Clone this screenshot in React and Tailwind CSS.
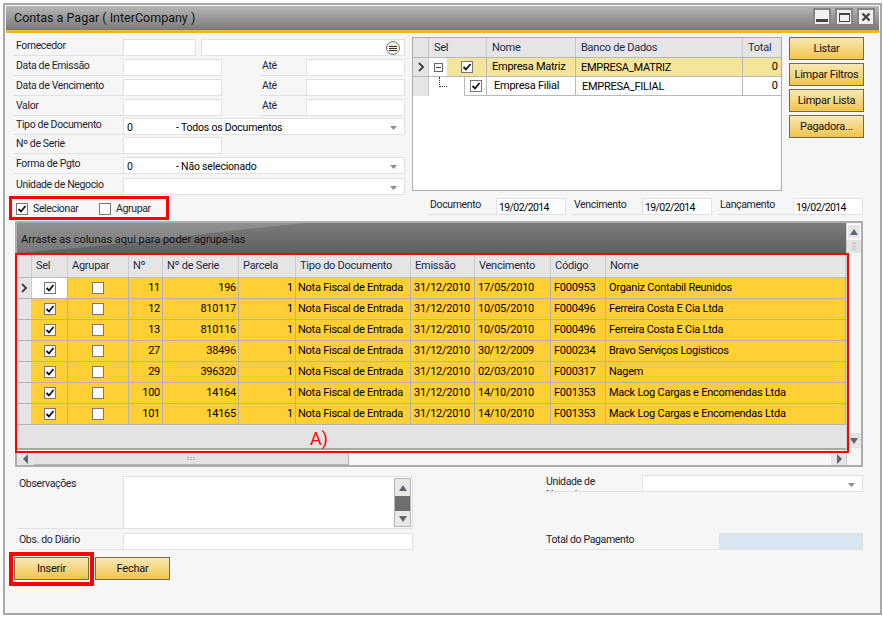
const columns = [
  { label: "Sel", width: "w-[36px]" },
  { label: "Agrupar", width: "w-[61px]" },
  { label: "Nº", width: "w-[34px]" },
  { label: "Nº de Serie", width: "w-[76px]" },
  { label: "Parcela", width: "w-[57px]" },
  { label: "Tipo do Documento", width: "w-[115px]" },
  { label: "Emissão", width: "w-[64px]" },
  { label: "Vencimento", width: "w-[76px]" },
  { label: "Código", width: "w-[55px]" },
  { label: "Nome", width: "w-[240px]" },
];

const rows = [
  ["11", "196", "17/05/2010", "F000953", "Organiz Contabil Reunidos"],
  ["12", "810117", "10/05/2010", "F000496", "Ferreira Costa E Cia Ltda"],
  ["13", "810116", "10/05/2010", "F000496", "Ferreira Costa E Cia Ltda"],
  ["27", "38496", "30/12/2009", "F000234", "Bravo Serviços Logisticos"],
  ["29", "396320", "02/03/2010", "F000317", "Nagem"],
  ["100", "14164", "14/10/2010", "F001353", "Mack Log Cargas e Encomendas Ltda"],
  ["101", "14165", "14/10/2010", "F001353", "Mack Log Cargas e Encomendas Ltda"],
];

function Check({ checked, className = "" }) {
  return (
    <span className={`inline-flex h-[12px] w-[12px] shrink-0 items-center justify-center border border-[#777] bg-white ${className}`}>
      {checked && (
        <svg width="10" height="10" viewBox="0 0 10 10">
          <path d="M1.5 5 L4 7.5 L8.5 2" fill="none" stroke="#111" strokeWidth="1.8" />
        </svg>
      )}
    </span>
  );
}

function Arrow({ dir, size = 10, color = "#5a6672" }) {
  const points = {
    up: "1,8 5,2 9,8",
    down: "1,2 5,8 9,2",
    left: "7,0 2,5 7,10",
    right: "3,0 8,5 3,10",
  };
  return (
    <svg width={size} height={size} viewBox="0 0 10 10">
      <polygon points={points[dir]} fill={color} />
    </svg>
  );
}

function Caret() {
  return (
    <svg width="8" height="6" viewBox="0 0 8 6" className="absolute right-[6px] top-[6px]">
      <polygon points="0,1 7,1 3.5,5" fill="#8a8f94" />
    </svg>
  );
}

function Field({ className = "", bg = "bg-white", children }) {
  return (
    <div className={`relative h-[17px] shrink-0 border border-[#dfe2e4] pl-[2px] text-[10.5px] leading-[17px] tracking-[-0.2px] text-black ${bg} ${className}`}>
      {children}
    </div>
  );
}

function Label({ className = "", children }) {
  return (
    <div className={`h-[17px] shrink-0 border-b border-[#dfe2e4] pl-[2px] text-[10.5px] leading-[13px] tracking-[-0.35px] text-[#1c2433] ${className}`}>
      {children}
    </div>
  );
}

function GoldButton({ className = "", children }) {
  return (
    <button className={`h-[23px] w-[75px] border border-[#756a4c] bg-linear-to-b from-[#f8e8b4] to-[#f1c445] text-[11px] leading-[20px] tracking-[-0.25px] text-[#111] ${className}`}>
      {children}
    </button>
  );
}

function ComboRow({ value, text, label, className = "" }) {
  return (
    <div className={`flex ${className}`}>
      <Label className="w-[109px]">{label}</Label>
      <Field className="w-[282px]">
        {value !== undefined && (
          <div className="flex">
            <span className="w-[50px] pl-[1px]">{value}</span>
            <span>{text}</span>
          </div>
        )}
        <Caret />
      </Field>
    </div>
  );
}

function RangeRow({ label, className = "" }) {
  return (
    <div className={`flex ${className}`}>
      <Label className="w-[109px]">{label}</Label>
      <Field className="w-[99px]" />
      <div className="w-[38px]" />
      <Label className="w-[46px]">Até</Label>
      <Field className="w-[99px]" />
    </div>
  );
}

function FilterForm() {
  return (
    <div className="mt-[2px] flex w-[391px] flex-col">
      <div className="flex">
        <Label className="w-[109px]">Fornecedor</Label>
        <Field className="w-[73px]" />
        <div className="w-[5px]" />
        <Field className="w-[204px]">
          <span className="absolute right-[4px] top-px flex h-[14px] w-[14px] flex-col items-center justify-center gap-px rounded-full border border-[#777] bg-[#f3efd9]">
            <span className="h-px w-[8px] bg-[#333]" />
            <span className="h-px w-[8px] bg-[#333]" />
            <span className="h-px w-[8px] bg-[#333]" />
          </span>
        </Field>
      </div>
      <RangeRow label="Data de Emissão" className="mt-[3px]" />
      <RangeRow label="Data de Vencimento" className="mt-[3px]" />
      <RangeRow label="Valor" className="mt-[3px]" />
      <ComboRow label="Tipo de Documento" value="0" text="- Todos os Documentos" className="mt-[2px]" />
      <div className="mt-[2px] flex">
        <Label className="w-[109px]">Nº de Serie</Label>
        <Field className="w-[99px]" />
      </div>
      <ComboRow label="Forma de Pgto" value="0" text="- Não selecionado" className="mt-[3px]" />
      <ComboRow label="Unidade de Negocio" className="mt-[4px]" />
    </div>
  );
}

function CompanyGrid() {
  const cell = "h-full shrink-0 border-r border-[#b9b9b9] text-[11px] leading-[18px] tracking-[-0.25px] text-black";
  const head = "h-full shrink-0 border-r border-[#c8c8c8] pl-[5px] text-[11px] leading-[20px] tracking-[-0.25px] text-[#1c2a4a]";
  return (
    <div className="h-[154px] w-[370px] border border-[#ababab] bg-white">
      <div className="flex h-[20px] border-b border-[#b9b9b9] bg-[#e5e5e5]">
        <div className={`${head} w-[16px]`} />
        <div className={`${head} w-[58px]`}>Sel</div>
        <div className={`${head} w-[89px]`}>Nome</div>
        <div className={`${head} w-[167px]`}>Banco de Dados</div>
        <div className="h-full flex-1 pl-[5px] text-[11px] leading-[20px] tracking-[-0.25px] text-[#1c2a4a]">Total</div>
      </div>
      <div className="flex h-[19px] border-b border-[#b9b9b9]">
        <div className="flex h-full w-[16px] shrink-0 items-center justify-center border-r border-[#c8c8c8] bg-[#e5e5e5]">
          <svg width="8" height="10" viewBox="0 0 8 10">
            <path d="M2 1 L6 5 L2 9" fill="none" stroke="#444" strokeWidth="2" />
          </svg>
        </div>
        <div className="flex h-full w-[18px] shrink-0 items-center justify-center">
          <span className="flex h-[9px] w-[9px] items-center justify-center border border-[#666]">
            <span className="h-px w-[5px] bg-[#333]" />
          </span>
        </div>
        <div className={`${cell} flex w-[40px] items-center justify-center bg-[#f5e59b]`}>
          <Check checked />
        </div>
        <div className={`${cell} w-[89px] bg-[#f5e59b] pl-[5px]`}>Empresa Matriz</div>
        <div className={`${cell} w-[167px] bg-[#f5e59b] pl-[5px] pt-px`}>EMPRESA_MATRIZ</div>
        <div className="h-full flex-1 bg-[#f5e59b] pr-[3px] text-right text-[11px] leading-[18px]">0</div>
      </div>
      <div className="flex h-[19px] border-b border-[#b9b9b9]">
        <div className="relative h-[19px] w-[16px] shrink-0 border-r border-[#c8c8c8] bg-[#e5e5e5]" />
        <div className="relative h-[19px] w-[36px] shrink-0 border-r border-[#b9b9b9] bg-white">
          <span className="absolute left-[10px] top-0 h-[10px] w-[8px] border-b border-l border-dotted border-[#333]" />
        </div>
        <div className={`${cell} flex w-[22px] items-center justify-center`}>
          <Check checked />
        </div>
        <div className={`${cell} w-[89px] pl-[7px]`}>Empresa Filial</div>
        <div className={`${cell} w-[167px] pl-[6px] pt-px`}>EMPRESA_FILIAL</div>
        <div className="h-full flex-1 pr-[3px] text-right text-[11px] leading-[18px]">0</div>
      </div>
    </div>
  );
}

function DateField({ label, labelWidth, className = "" }) {
  return (
    <div className={`flex ${className}`}>
      <Label className={labelWidth}>{label}</Label>
      <Field className="w-[70px]">
        <span className="tracking-[-0.6px]">19/02/2014</span>
      </Field>
    </div>
  );
}

function Grip() {
  return (
    <span className="grid grid-cols-3 gap-px">
      {[0, 1, 2, 3, 4, 5].map((i) => (
        <span key={i} className="h-px w-[2px] bg-[#b5b5b5]" />
      ))}
    </span>
  );
}

function DocumentGrid() {
  const base = "h-full shrink-0 whitespace-nowrap border-r border-[#b2b2b2] text-[11px] leading-[20px] tracking-[-0.25px] text-black";
  return (
    <div className="mt-[2px] flex h-[246px] w-[848px] border-2 border-[#adadad] bg-[#f6f6f6]">
      <div className="flex w-[829px] flex-col">
        <div className="relative h-[30px] shrink-0 bg-linear-to-b from-[#7c7c7c] to-[#5f5f5f] pl-[4px] pt-[10px] text-[11px] leading-[14px] text-[#111]">
          <svg width="300" height="30" viewBox="0 0 300 30" className="absolute left-0 top-0">
            <path d="M0 0 L290 0 C200 8 110 22 0 30 Z" fill="#ffffff" fillOpacity="0.16" />
          </svg>
          <span className="relative">Arraste as colunas aqui para poder agrupa-las</span>
        </div>
        <div className="flex h-[25px] shrink-0 border-b border-t-2 border-[#bcbcbc] border-t-[#f6f6f6] bg-[#e5e5e5]">
          <div className="h-full w-[15px] shrink-0 border-r border-[#cdcdcd]" />
          {columns.map((c) => (
            <div key={c.label} className={`h-full shrink-0 border-r border-[#cdcdcd] pl-[4px] text-[11px] leading-[22px] tracking-[-0.25px] text-[#1c2a4a] ${c.width}`}>
              {c.label}
            </div>
          ))}
        </div>
        {rows.map((r, i) => (
          <div key={r[0]} className="flex h-[21px] shrink-0 border-b border-[#b2b2b2] bg-[#ffcf33]">
            <div className="flex h-full w-[15px] shrink-0 items-center justify-center border-r border-[#cdcdcd] bg-[#e5e5e5]">
              {i === 0 && (
                <svg width="8" height="10" viewBox="0 0 8 10">
                  <path d="M2 1 L6 5 L2 9" fill="none" stroke="#444" strokeWidth="2" />
                </svg>
              )}
            </div>
            <div className={`${base} flex w-[36px] items-center justify-center ${i === 0 ? "bg-white" : ""}`}>
              <Check checked />
            </div>
            <div className={`${base} flex w-[61px] items-center justify-center`}>
              <Check />
            </div>
            <div className={`${base} w-[34px] pr-[2px] text-right`}>{r[0]}</div>
            <div className={`${base} w-[76px] pr-[2px] text-right`}>{r[1]}</div>
            <div className={`${base} w-[57px] pr-[2px] text-right`}>1</div>
            <div className={`${base} w-[115px] pl-[2px]`}>Nota Fiscal de Entrada</div>
            <div className={`${base} w-[64px] pl-[3px]`}>31/12/2010</div>
            <div className={`${base} w-[76px] pl-[3px]`}>{r[2]}</div>
            <div className={`${base} w-[55px] pl-[3px]`}>{r[3]}</div>
            <div className={`${base} w-[240px] pl-[3px]`}>{r[4]}</div>
          </div>
        ))}
        <div className="h-[25px] shrink-0 border-b-2 border-[#a8a8a8] bg-[#e3e3e3]" />
        <div className="mt-[3px] flex h-[12px] shrink-0">
          <div className="flex h-full w-[17px] items-center justify-center bg-[#e5e5e5]">
            <Arrow dir="left" />
          </div>
          <div className="flex h-full w-[315px] items-center justify-center border-b border-r border-[#b5b5b5] bg-[#e3e3e3]">
            <Grip />
          </div>
          <div className="flex-1" />
          <div className="flex h-full w-[15px] items-center justify-center bg-[#e5e5e5]">
            <Arrow dir="right" />
          </div>
        </div>
      </div>
      <div className="flex w-[15px] flex-col border-l border-[#cfcfcf] pt-[1px]">
        <div className="flex h-[15px] items-center justify-center border border-white bg-[#e5e5e5]">
          <Arrow dir="up" />
        </div>
        <div className="mt-px flex h-[13px] items-center justify-center bg-[#e3e3e3]">
          <span className="rotate-90">
            <Grip />
          </span>
        </div>
        <div className="flex-1" />
        <div className="mb-[17px] flex h-[15px] items-center justify-center bg-[#e5e5e5]">
          <Arrow dir="down" />
        </div>
      </div>
    </div>
  );
}

function Notes() {
  return (
    <div className="mt-[9px] flex">
      <div className="flex w-[396px] flex-col">
        <div className="flex h-[53px] border-b border-[#dfe2e4] pl-[2px]">
          <div className="w-[104px] pt-[1px] text-[10.5px] leading-[13px] tracking-[-0.35px] text-[#1c2433]">Observações</div>
          <div className="relative h-full w-[290px] border-x border-t border-[#dfe2e4] bg-white">
            <div className="absolute right-[1px] top-[1px] flex h-[49px] w-[17px] flex-col border border-[#b5b5b5] bg-[#e8e8e8]">
              <div className="flex h-[17px] items-center justify-center">
                <Arrow dir="up" />
              </div>
              <div className="h-[15px] bg-[#6e6e6e]" />
              <div className="flex flex-1 items-center justify-center">
                <Arrow dir="down" />
              </div>
            </div>
          </div>
        </div>
        <div className="mt-[4px] flex">
          <Label className="w-[106px]">Obs. do Diário</Label>
          <Field className="w-[290px]" />
        </div>
      </div>
      <div className="-mt-px ml-[131px] flex w-[319px] flex-col">
        <div className="flex">
          <Label className="w-[98px] overflow-hidden pr-[28px]">Unidade de Negocio</Label>
          <Field className="w-[221px]">
            <Caret />
          </Field>
        </div>
        <div className="mt-[41px] flex">
          <Label className="w-[175px]">Total do Pagamento</Label>
          <Field className="w-[144px]" bg="bg-[#dae5f2]" />
        </div>
      </div>
    </div>
  );
}

export default function App() {
  return (
    <div className="relative h-[617px] w-[883px] bg-white pl-[3px] pt-[3px] font-['Roboto',sans-serif]">
      <div className="h-[612px] w-[879px] border-2 border-[#a8a8a8] bg-[#f6f6f6] pl-px pt-px">
        <div className="flex h-[27px] w-[873px] items-start justify-between border-b-[3px] border-[#f5b316] bg-linear-to-b from-[#b7b7b7] to-[#7a7a7a] pl-[8px] pr-[4px]">
          <div className="pt-[3px] text-[12.5px] leading-[18px] text-[#111]">Contas a Pagar ( InterCompany )</div>
          <div className="flex gap-[4px] pt-[2px]">
            <span className="flex h-[18px] w-[18px] items-end justify-center border-2 border-[#858585] bg-[#f0f0f0] pb-[2px]">
              <span className="h-[3px] w-[12px] bg-[#444]" />
            </span>
            <span className="flex h-[18px] w-[18px] items-center justify-center border-2 border-[#858585] bg-[#f0f0f0]">
              <span className="h-[9px] w-[11px] border border-t-2 border-[#444]" />
            </span>
            <span className="flex h-[18px] w-[18px] items-center justify-center border-2 border-[#858585] bg-[#f0f0f0]">
              <svg width="10" height="10" viewBox="0 0 10 10">
                <path d="M1.5 1.5 L8.5 8.5 M8.5 1.5 L1.5 8.5" stroke="#444" strokeWidth="2.4" />
              </svg>
            </span>
          </div>
        </div>

        <div className="flex pl-[8px] pt-[4px]">
          <FilterForm />
          <div className="ml-[7px]">
            <CompanyGrid />
          </div>
          <div className="ml-[7px] flex flex-col gap-[3px]">
            <GoldButton>Listar</GoldButton>
            <GoldButton>Limpar Filtros</GoldButton>
            <GoldButton>Limpar Lista</GoldButton>
            <GoldButton>Pagadora...</GoldButton>
          </div>
        </div>

        <div className="flex h-[24px] pl-[10px] pt-[7px]">
          <div className="flex h-[14px] w-[412px] items-center text-[10.5px] tracking-[-0.35px] text-[#1c2433]">
            <Check checked />
            <span className="ml-[5px] w-[66px]">Selecionar</span>
            <Check />
            <span className="ml-[5px]">Agrupar</span>
          </div>
          <div className="-mt-[4px] flex">
            <DateField label="Documento" labelWidth="w-[68px]" />
            <DateField label="Vencimento" labelWidth="w-[70px]" className="ml-[6px]" />
            <DateField label="Lançamento" labelWidth="w-[75px]" className="ml-[6px]" />
          </div>
        </div>

        <div className="pl-[9px]">
          <DocumentGrid />
        </div>

        <div className="pl-[11px]">
          <Notes />
        </div>

        <div className="mt-[7px] flex gap-[6px] pl-[8px]">
          <GoldButton>Inserir</GoldButton>
          <GoldButton>Fechar</GoldButton>
        </div>
      </div>

      {/* anotacoes em vermelho */}
      <div className="absolute left-[9px] top-[196px] h-[24px] w-[160px] border-[3px] border-[#f00]" />
      <div className="absolute left-[15px] top-[253px] h-[200px] w-[834px] border-2 border-[#f00]" />
      <div className="absolute left-[9px] top-[552px] h-[34px] w-[85px] border-4 border-[#f00]" />
      <div className="absolute left-[310px] top-[428px] text-[18px] leading-[22px] text-[#f00]">A)</div>
    </div>
  );
}
